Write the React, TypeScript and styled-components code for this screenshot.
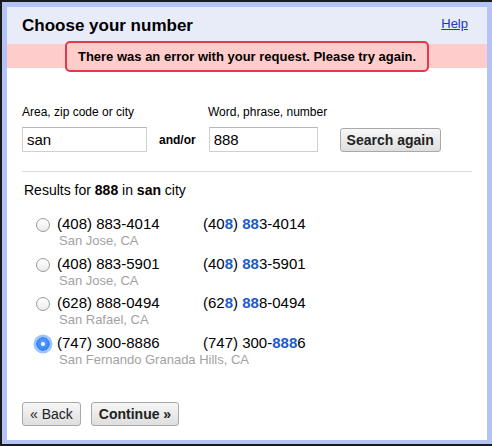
import React from "react";
import styled, { createGlobalStyle } from "styled-components";

const Global = createGlobalStyle`
  html, body { margin: 0; padding: 0; background: #fff; }
  body { font-family: "Liberation Sans", Arial, sans-serif; color: #000; }
`;

const Frame = styled.div`
  box-sizing: border-box;
  width: 492px;
  height: 446px;
  border-top: 2px solid #1a1a1a;
  border-left: 2px solid #1a1a1a;
  border-bottom: 2px solid #1a1a1a;
  background: #b4c3f5;
  padding: 5px 5px 4px 5px;
`;

const Panel = styled.div`
  height: 100%;
  background: #fff;
  display: flex;
  flex-direction: column;
`;

const Header = styled.div`
  height: 37px;
  background: #e8ecf9;
  display: flex;
  align-items: center;
  justify-content: space-between;
  padding: 0 19px 0 15px;
`;

const Title = styled.h1`
  margin: 0;
  font-size: 17px;
  line-height: 37px;
  font-weight: bold;
`;

const HelpLink = styled.a`
  font-size: 13px;
  color: #2233cc;
  text-decoration: underline;
  margin-bottom: 4px;
  cursor: pointer;
`;

const ErrorBand = styled.div`
  height: 24px;
  background: #fcc;
  display: flex;
  align-items: center;
  justify-content: center;
`;

const ErrorBox = styled.div`
  box-sizing: border-box;
  width: 364px;
  height: 31px;
  flex-shrink: 0;
  border: 2px solid #e2394b;
  border-radius: 5px;
  background: #fcc;
  font-size: 13px;
  font-weight: bold;
  display: flex;
  align-items: center;
  justify-content: center;
`;

const Body = styled.div`
  padding: 37px 15px 0 15px;
  display: flex;
  flex-direction: column;
`;

const LabelRow = styled.div`
  display: flex;
  font-size: 12px;
  line-height: 15px;
  height: 15px;
`;

const Label = styled.div<{ $w: number }>`
  width: ${(p) => p.$w}px;
`;

const InputRow = styled.div`
  display: flex;
  align-items: center;
  height: 25px;
  margin-top: 7px;
`;

const TextInput = styled.input<{ $w: number }>`
  box-sizing: border-box;
  width: ${(p) => p.$w}px;
  height: 25px;
  border: 1px solid #cfcfcf;
  border-top-color: #b8b8b8;
  padding: 0 4px;
  font-family: "Liberation Sans", Arial, sans-serif;
  font-size: 15px;
  color: #000;
  outline: none;
`;

const AndOr = styled.span`
  font-size: 12px;
  font-weight: bold;
  margin: 0 13px 0 12px;
`;

const GrayButton = styled.button<{ $bold?: boolean }>`
  box-sizing: border-box;
  height: 24px;
  padding: 0 7px;
  border: 1px solid #a9a9a9;
  border-radius: 3px;
  background: linear-gradient(#f7f7f7, #dedede);
  font-family: "Liberation Sans", Arial, sans-serif;
  font-size: 14px;
  font-weight: ${(p) => (p.$bold ? "bold" : "normal")};
  color: #222;
  white-space: nowrap;
  cursor: pointer;
`;

const SearchButton = styled(GrayButton)`
  margin-left: 22px;
  width: 101px;
  padding: 0;
`;

const Divider = styled.hr`
  border: none;
  border-top: 1px solid #dcdcdc;
  margin: 19px 0 0 0;
  width: 450px;
`;

const ResultsFor = styled.div`
  margin-top: 10px;
  font-size: 14px;
  line-height: 17px;
  padding-left: 2px;
`;

const List = styled.div`
  margin-top: 16px;
  display: flex;
  flex-direction: column;
  gap: 5.5px;
`;

const Row = styled.label`
  display: flex;
  align-items: flex-start;
  cursor: pointer;
`;

const Radio = styled.span<{ $checked?: boolean }>`
  box-sizing: border-box;
  width: 14px;
  height: 14px;
  margin: 3px 7px 0 14px;
  border-radius: 50%;
  flex-shrink: 0;
  display: flex;
  align-items: center;
  justify-content: center;
  border: 1px solid ${(p) => (p.$checked ? "#2f7ff0" : "#9a9a9a")};
  background: ${(p) =>
    p.$checked
      ? "radial-gradient(circle at 50% 40%, #5aa2ff, #2a7af2)"
      : "linear-gradient(#fff, #ececec)"};
  box-shadow: ${(p) => (p.$checked ? "0 0 0 2.5px rgba(110,165,250,0.65)" : "none")};
  &::after {
    content: "";
    display: ${(p) => (p.$checked ? "block" : "none")};
    width: 4px;
    height: 4px;
    border-radius: 50%;
    background: #fff;
  }
`;

const Info = styled.div`
  display: flex;
  flex-direction: column;
`;

const Numbers = styled.div`
  display: flex;
  font-size: 15px;
  line-height: 18px;
`;

const Number = styled.span`
  width: 146px;
`;

const City = styled.div`
  font-size: 13px;
  line-height: 16px;
  color: #a2a2a2;
  padding-left: 2px;
`;

const Hl = styled.b`
  color: #1a5cc8;
`;

const Footer = styled.div`
  display: flex;
  gap: 10px;
  margin-top: 34.5px;
`;

type Result = { n: string; city: string; hl: React.ReactNode; checked?: boolean };

const results: Result[] = [
  { n: "(408) 883-4014", city: "San Jose, CA", hl: <>(40<Hl>8</Hl>) <Hl>88</Hl>3-4014</> },
  { n: "(408) 883-5901", city: "San Jose, CA", hl: <>(40<Hl>8</Hl>) <Hl>88</Hl>3-5901</> },
  { n: "(628) 888-0494", city: "San Rafael, CA", hl: <>(62<Hl>8</Hl>) <Hl>88</Hl>8-0494</> },
  {
    n: "(747) 300-8886",
    city: "San Fernando Granada Hills, CA",
    hl: <>(747) 300-<Hl>888</Hl>6</>,
    checked: true,
  },
];

export default function App() {
  return (
    <>
      <Global />
      <Frame>
        <Panel>
          <Header>
            <Title>Choose your number</Title>
            <HelpLink>Help</HelpLink>
          </Header>
          <ErrorBand>
            <ErrorBox>There was an error with your request. Please try again.</ErrorBox>
          </ErrorBand>
          <Body>
            <LabelRow>
              <Label $w={186}>Area, zip code or city</Label>
              <Label $w={150}>Word, phrase, number</Label>
            </LabelRow>
            <InputRow>
              <TextInput $w={125} defaultValue="san" />
              <AndOr>and/or</AndOr>
              <TextInput $w={109} defaultValue="888" />
              <SearchButton $bold>Search again</SearchButton>
            </InputRow>
            <Divider />
            <ResultsFor>
              Results for <b>888</b> in <b>san</b> city
            </ResultsFor>
            <List>
              {results.map((r) => (
                <Row key={r.n}>
                  <Radio $checked={r.checked} />
                  <Info>
                    <Numbers>
                      <Number>{r.n}</Number>
                      <span>{r.hl}</span>
                    </Numbers>
                    <City>{r.city}</City>
                  </Info>
                </Row>
              ))}
            </List>
            <Footer>
              <GrayButton>« Back</GrayButton>
              <GrayButton $bold>Continue »</GrayButton>
            </Footer>
          </Body>
        </Panel>
      </Frame>
    </>
  );
}
